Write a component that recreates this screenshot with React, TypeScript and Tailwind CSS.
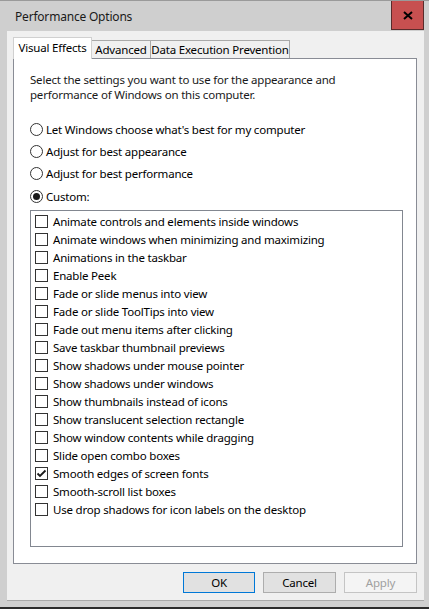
import React from "react";

const items: [string, boolean][] = [
  ["Animate controls and elements inside windows", false],
  ["Animate windows when minimizing and maximizing", false],
  ["Animations in the taskbar", false],
  ["Enable Peek", false],
  ["Fade or slide menus into view", false],
  ["Fade or slide ToolTips into view", false],
  ["Fade out menu items after clicking", false],
  ["Save taskbar thumbnail previews", false],
  ["Show shadows under mouse pointer", false],
  ["Show shadows under windows", false],
  ["Show thumbnails instead of icons", false],
  ["Show translucent selection rectangle", false],
  ["Show window contents while dragging", false],
  ["Slide open combo boxes", false],
  ["Smooth edges of screen fonts", true],
  ["Smooth-scroll list boxes", false],
  ["Use drop shadows for icon labels on the desktop", false],
];

const radios: [string, boolean][] = [
  ["Let Windows choose what's best for my computer", false],
  ["Adjust for best appearance", false],
  ["Adjust for best performance", false],
  ["Custom:", true],
];

function Radio({ checked }: { checked: boolean }) {
  return (
    <span className="w-[13px] h-[13px] rounded-full border border-[#333333] bg-white flex items-center justify-center shrink-0">
      {checked && <span className="w-[7px] h-[7px] rounded-full bg-[#1a1a1a]" />}
    </span>
  );
}

function Check({ checked }: { checked: boolean }) {
  return (
    <span className="w-[13px] h-[13px] border border-[#333333] bg-white flex items-center justify-center shrink-0">
      {checked && (
        <svg width="11" height="11" viewBox="0 0 11 11">
          <path d="M1.5 5.5 L4 8 L9.5 2.5" fill="none" stroke="#1a1a1a" strokeWidth="1.8" />
        </svg>
      )}
    </span>
  );
}

export default function App() {
  return (
    <div
      className="w-[429px] h-[609px] bg-[#cfcfcf] flex flex-col text-[11.5px] tracking-[-0.2px] text-black border-t border-[#9a9a9a] border-b-2 border-b-[#2b2b2b] overflow-hidden"
      style={{ fontFamily: '"Noto Sans", "Open Sans", sans-serif' }}
    >
      {/* Title bar */}
      <div className="h-[30px] flex items-start shrink-0">
        <div className="pl-[15px] pt-[8px] text-[12px] leading-[15px] text-[#1a1a1a]">Performance Options</div>
        <div className="ml-auto mr-[5px] w-[33px] h-[29px] bg-[#c75050] border border-t-0 border-[#5a2b2b] flex items-center justify-center">
          <svg width="10" height="9" viewBox="0 0 10 9">
            <path d="M1 1 L9 8 M9 1 L1 8" stroke="#000" strokeWidth="2" />
          </svg>
        </div>
      </div>

      {/* Client area */}
      <div className="ml-[7px] mr-[5px] h-[570px] bg-[#f0f0f0] flex flex-col pl-[6px] pr-[7px] pt-[6px] border-b border-[#a8a8a8]">
        {/* Tabs */}
        <div className="flex items-end h-[21px] relative z-10 whitespace-nowrap">
          <div className="h-[22px] -mb-[1px] w-[79px] bg-white border border-b-0 border-[#d0d0d0] flex items-center justify-center leading-[14px] pb-[2px]">
            Visual Effects
          </div>
          <div className="h-[18px] w-[59px] border border-l-0 border-b-0 border-[#a9a9a9] bg-[#f0f0f0] flex items-center justify-center leading-[14px]">
            Advanced
          </div>
          <div className="h-[18px] w-[139px] border border-l-0 border-b-0 border-[#a9a9a9] bg-[#f0f0f0] flex items-center justify-center leading-[14px]">
            Data Execution Prevention
          </div>
        </div>

        {/* Panel */}
        <div className="h-[506px] bg-white border border-[#898c95] flex flex-col pl-[16px] pt-[13px]">
          <p className="leading-[15px] text-[#1a1a1a]">
            Select the settings you want to use for the appearance and
            <br />
            performance of Windows on this computer.
          </p>
          <div className="flex flex-col mt-[16px]">
            {radios.map(([label, c]) => (
              <div key={label} className="flex items-center h-[22.3px] gap-[3px]">
                <Radio checked={c} />
                <span className="leading-[15px]">{label}</span>
              </div>
            ))}
          </div>
          <div className="mt-[3px] w-[373px] h-[337px] border border-[#828790] bg-white flex flex-col pt-[1px] pl-[4px]">
            {items.map(([label, c]) => (
              <div key={label} className="flex items-center h-[18px] gap-[5px]">
                <Check checked={c} />
                <span className="leading-[15px]">{label}</span>
              </div>
            ))}
          </div>
        </div>

        {/* Buttons */}
        <div className="flex justify-end gap-[8px] mt-[8px]">
          <button className="w-[72px] h-[21px] bg-[#e1e1e1] border border-[#0078d7] flex items-center justify-center leading-[14px]">
            OK
          </button>
          <button className="w-[73px] h-[21px] bg-[#e1e1e1] border border-[#adadad] flex items-center justify-center leading-[14px]">
            Cancel
          </button>
          <button className="w-[73px] h-[21px] bg-[#f4f4f4] border border-[#c4c4c4] text-[#a0a0a0] flex items-center justify-center leading-[14px]">
            Apply
          </button>
        </div>
      </div>
    </div>
  );
}
